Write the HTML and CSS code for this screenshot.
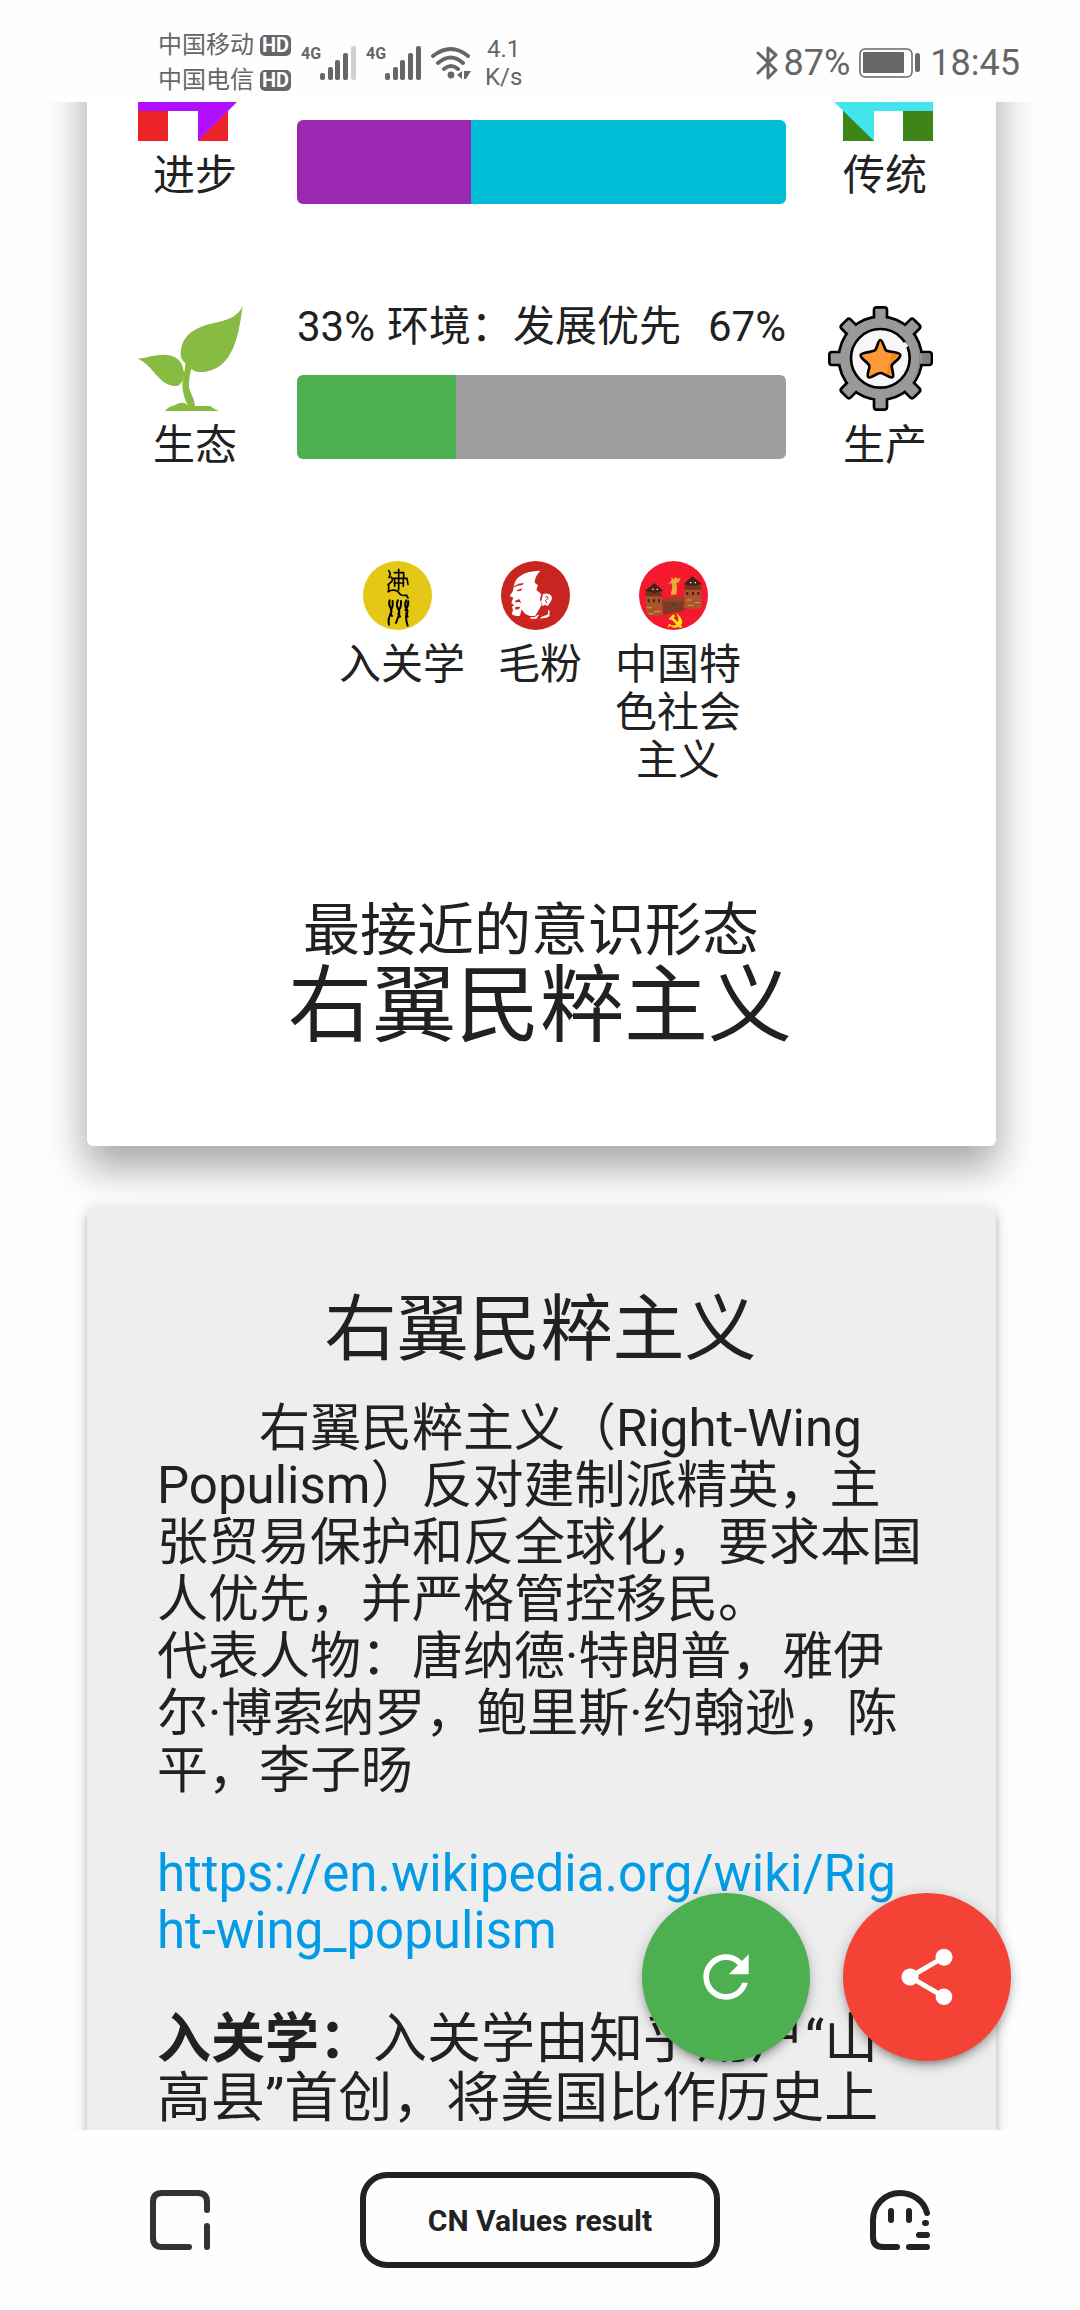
FILE: index.html
```html
<!DOCTYPE html>
<html lang="zh-CN">
<head>
<meta charset="utf-8">
<meta name="viewport" content="width=device-width, initial-scale=1">
<title>CN Values result</title>
<link rel="stylesheet" href="styles.css">
</head>
<body>
<header class="status">
  <div class="carriers">
    <div class="carrier">中国移动<span class="hd">HD</span></div>
    <div class="carrier">中国电信<span class="hd">HD</span></div>
  </div>
  <div class="signal">
    <span class="gen">4G</span>
    <svg width="36" height="34" viewBox="0 0 36 34" fill="#666"><rect y="27" width="5" height="7" rx="2"/><rect x="8" y="21" width="5" height="13" rx="2"/><rect x="15" y="14" width="5" height="20" rx="2"/><rect x="23" y="7" width="5" height="27" rx="2"/><rect x="31" width="5" height="34" rx="2" fill="#d0d0d0"/></svg>
  </div>
  <div class="signal">
    <span class="gen">4G</span>
    <svg width="36" height="34" viewBox="0 0 36 34" fill="#666"><rect y="27" width="5" height="7" rx="2"/><rect x="8" y="21" width="5" height="13" rx="2"/><rect x="15" y="14" width="5" height="20" rx="2"/><rect x="23" y="7" width="5" height="27" rx="2"/><rect x="31" width="5" height="34" rx="2"/></svg>
  </div>
  <svg class="wifi" width="40" height="34" viewBox="0 0 40 34" fill="none" stroke="#666" stroke-width="4" stroke-linecap="round"><path d="M2 10Q20 -4 37 10M7 17Q20 6 32 17M13 23Q20 17 27 23"/><circle cx="20" cy="29" r="3.4" fill="#666" stroke="none"/><path d="M26 29l5-4v8zM40 25l-5 8v-8z" fill="#666" stroke="none"/><path d="M34 25v8" stroke-width="2" stroke-linecap="butt"/></svg>
  <div class="speed"><span>4.1</span><span>K/s</span></div>
  <div class="status-right">
    <svg width="22" height="36" viewBox="0 0 22 36" fill="none" stroke="#666" stroke-width="3" stroke-linejoin="round" stroke-linecap="round"><path d="M2 8L20 25L12 33V3L20 10L2 28"/></svg>
    <span class="percent">87%</span>
    <svg width="62" height="30" viewBox="0 0 62 30"><rect x="1" y="1" width="52" height="28" rx="5" fill="none" stroke="#666" stroke-width="1.5"/><rect x="4" y="4" width="41" height="21" rx="1" fill="#666"/><rect x="56" y="5" width="5" height="19" rx="2.5" fill="#666"/></svg>
    <time class="clock">18:45</time>
  </div>
</header>

<main class="view">
  <section class="card result">
    <div class="axis">
      <div class="side">
        <svg width="105" height="90" viewBox="0 0 105 90"><path d="M0 0H90V90H60V60H30V90H0z" fill="#ec2427"/><path d="M0 0H105V45L60 90V60H0z" fill="#b010ff"/></svg>
        <span>进步</span>
      </div>
      <div class="meter bare">
        <div class="bar"><div class="fill purple" style="width:35.6%"></div><div class="fill cyan"></div></div>
      </div>
      <div class="side right">
        <svg width="105" height="90" viewBox="0 0 105 90"><path d="M15 0H105V90H75V60H46V90H15z" fill="#3d8517"/><path d="M105 0H0V45L46 90V60H105z" fill="#44e4ec"/></svg>
        <span>传统</span>
      </div>
    </div>

    <div class="axis">
      <div class="side">
        <svg width="105" height="105" viewBox="0 0 315 315" fill="#88bb41"><path d="M314 0C300 32 270 42 225 52C170 64 128 90 128 145C128 158 135 166 143 172L133 235C134 262 141 280 150 300C142 288 128 288 112 297Q92 302 80 315H243Q228 309 216 300H171C170 280 158 262 153 245C152 225 155 208 160 188C172 200 190 199 204 197C285 184 302 90 314 0z"/><path d="M0 158C35 155 62 142 92 148C120 152 134 172 136 192L140 202L134 224C128 234 122 242 108 240C58 232 46 178 0 158z"/></svg>
        <span>生态</span>
      </div>
      <div class="meter">
        <div class="caption"><span>33%</span><span>环境：发展优先</span><span class="end">67%</span></div>
        <div class="bar"><div class="fill green" style="width:32.5%"></div><div class="fill grey"></div></div>
      </div>
      <div class="side right">
        <svg width="105" height="105" viewBox="0 0 315 315">
          <defs><g id="teeth"><rect x="142" y="8" width="31" height="299" rx="4"/><rect x="142" y="8" width="31" height="299" rx="4" transform="rotate(45 157.500 157.500)"/><rect x="142" y="8" width="31" height="299" rx="4" transform="rotate(90 157.500 157.500)"/><rect x="142" y="8" width="31" height="299" rx="4" transform="rotate(135 157.500 157.500)"/></g></defs>
          <use href="#teeth" stroke="#000" stroke-width="16" stroke-linejoin="round"/><circle cx="157" cy="157" r="129"/>
          <use href="#teeth" fill="#999"/><circle cx="157" cy="157" r="121" fill="#999"/>
          <path d="M250 80Q300 157 245 243L265 213Q292 157 262 100z" fill="#808080"/><path d="M282 142h22q3 0 3 4v22q0 4-3 4h-22z" fill="#808080"/>
          <circle cx="157" cy="157" r="88" fill="#f8f6f9" stroke="#000" stroke-width="8"/><path d="M228 110l10 12" stroke="#f8f6f9" stroke-width="9"/>
          <path d="M157 102C164 102 168 126 174 133C181 138 216 138 217 147C219 157 195 169 191 179C190 188 201 210 193 214C186 217 167 201 157 201C148 201 129 217 122 214C113 209 126 188 124 179C120 169 96 157 98 147C100 138 134 139 141 133C148 126 150 102 157 102z" fill="#ff9838" stroke="#000" stroke-width="8" stroke-linejoin="round"/><path d="M196 142L211 147Q190 161 185 176Q184 188 189 207L176 202Q186 160 196 142z" fill="#fb8410"/>
        </svg>
        <span>生产</span>
      </div>
    </div>

    <div class="badges">
      <div class="badge">
        <svg width="69" height="69" viewBox="0 0 207 207"><circle cx="103.500" cy="103.500" r="103.500" fill="#e5c715"/><g fill="none" stroke="#000" stroke-width="5" stroke-linecap="round" stroke-linejoin="round"><path d="M77 29l5 9-4 12M84 48q8 8 1 15l-10 8M77 71v21M75 92q14-8 28-2l9 10q8 6 18 2l5 9M107 25v61M94 35h28v16M90 52h42l3 18M93 66h29M95 52v24M121 52v24"/><path d="M80 118q-4 11 2 21t1 20q-9 14-5 32M89 120q2 14-5 28M105 118q-7 13 0 24t2 22l-8 22M114 120q2 15-6 28M130 118q-7 14 0 24t-1 24q0 16 5 28M136 121q0 16-9 27M82 157l5 8M106 157l5 10M129 157l5 10" stroke-width="6"/></g></svg>
        <span>入关学</span>
      </div>
      <div class="badge">
        <svg width="69" height="69" viewBox="0 0 207 207"><circle cx="103.500" cy="103.500" r="103.500" fill="#c82420"/><path d="M118 29C85 30 62 38 48 53C39 63 39 76 36 89L26 105L37 110L31 126L39 132L33 137L36 148L32 159Q43 168 57 164L62 145L69 155Q84 169 103 164L111 151L122 132L117 114L121 100L106 86L111 73L101 65Q101 47 118 29z" fill="#fff"/><path d="M126 99q14-5 24 4 6 10-1 19l-9 13-9-4-5 5-6-12z" fill="#fff"/><path d="M133 108q9-4 8 4l-7 6 3 9" fill="none" stroke="#c82420" stroke-width="3"/><path d="M143 148q5 15-14 18l-10 5 17-2 8-4zM88 171q14 2 24-9l-6 10z" fill="#fff" stroke="#fff" stroke-width="3" stroke-linejoin="round"/><path d="M39 76l14-8 15-2-4 6-14 2-10 5zM48 87l17-5-5 7-11 2zM42 120l13-6 6 12-6-3-12 1zM43 138l15-1-4 7-11 2z" fill="#c82420"/><path d="M57 171q30 9 60 5" stroke="#e02818" stroke-width="4" fill="none"/></svg>
        <span>毛粉</span>
      </div>
      <div class="badge">
        <svg width="69" height="69" viewBox="0 0 207 207"><circle cx="103.500" cy="103.500" r="103.500" fill="#f5192f"/><path d="M70 118l32-7 35 2v36l-65 12z" fill="#7c3b22"/><path d="M74 114h9v-5h9v4h9v-6h9v5h9v-6h9v6h11v10H72z" fill="#8f472a"/><circle cx="105" cy="131" r="6" fill="#444"/><path d="M98 48l6 7 6-8 4 6 11-3-5 12-8 5 2 14-2 20h-17l5-22-1-12-11 1 9-9z" fill="#e9ae38"/><path d="M19 103h49l4 58-18 4-32-3z" fill="#a9542c"/><path d="M22 89h44l3 17H19z" fill="#74351f"/><path d="M17 90L46 66l27 23-27 7z" fill="#4b1e18"/><path d="M137 80h48l3 60-20 4-33-3z" fill="#a9542c"/><path d="M138 69h46l4 17h-52z" fill="#74351f"/><path d="M134 70L160 45l29 24-28 6z" fill="#4b1e18"/><path d="M29 115v9m16-9v9m15-9v9M145 93v9m17-9v9m16-9v9" stroke="#461c16" stroke-width="6"/><path d="M23 140h16m6 12h20M29 158h15M143 117h14m10 8h17m-38 8h18" stroke="#dd8942" stroke-width="4"/><path d="M40 85h4m9 0h4M153 65h4m10 0h4" stroke="#fff" stroke-width="4"/><path d="M111 155Q146 184 116 198Q104 204 94 194L86 201L90 188Q109 201 117 184Q121 170 111 155z" fill="#ffea12"/><path d="M89 174L103 160l6 6-6 4 27 27-7 5-26-27-3 3z" fill="#ffea12"/></svg>
        <span>中国特色社会主义</span>
      </div>
    </div>

    <p class="closest">最接近的意识形态</p>
    <h1 class="ideology">右翼民粹主义</h1>
  </section>

  <section class="card detail">
    <h2>右翼民粹主义</h2>
    <p class="text indent">右翼民粹主义（Right-Wing Populism）反对建制派精英，主张贸易保护和反全球化，要求本国人优先，并严格管控移民。</p>
    <p class="text">代表人物：唐纳德·特朗普，雅伊尔·博索纳罗，鲍里斯·约翰逊，陈平，李子旸</p>
    <p class="text link"><a href="https://en.wikipedia.org/wiki/Right-wing_populism">https://en.wikipedia.org/wiki/Right-wing_populism</a></p>
    <p class="note"><b>入关学：</b>入关学由知乎用户“山高县”首创，将美国比作历史上</p>
  </section>

  <div class="fabs">
    <button class="fab green" type="button" aria-label="重新测试"><svg width="68" height="68" viewBox="0 0 24 24" fill="#fff"><path d="M17.650 6.350C16.200 4.900 14.210 4 12 4c-4.420 0-7.990 3.580-7.990 8s3.570 8 7.990 8c3.730 0 6.840-2.550 7.730-6h-2.080c-.82 2.330-3.040 4-5.650 4-3.310 0-6-2.690-6-6s2.690-6 6-6c1.660 0 3.140.69 4.220 1.780L13 11h7V4l-2.350 2.350z"/></svg></button>
    <button class="fab red" type="button" aria-label="分享"><svg width="68" height="68" viewBox="0 0 24 24" fill="#fff"><path d="M18 16.080c-.76 0-1.440.3-1.960.77L8.910 12.700c.05-.23.09-.46.09-.7s-.04-.47-.09-.7l7.050-4.110c.54.5 1.250.81 2.040.81 1.660 0 3-1.340 3-3s-1.340-3-3-3-3 1.340-3 3c0 .24.04.47.09.7L8.040 9.810C7.500 9.310 6.790 9 6 9c-1.660 0-3 1.340-3 3s1.340 3 3 3c.79 0 1.500-.31 2.040-.81l7.120 4.160c-.05.21-.08.43-.08.65 0 1.610 1.310 2.920 2.920 2.920s2.920-1.310 2.920-2.920-1.310-2.920-2.920-2.920z"/></svg></button>
  </div>
</main>

<nav class="dock">
  <button class="icon" type="button" aria-label="标签页"><svg width="60" height="60" viewBox="0 0 60 60" fill="none" stroke="#333" stroke-width="6" stroke-linecap="round"><path d="M57 20V12Q57 3 48 3H12Q3 3 3 12V48Q3 57 12 57H39M57 36V57"/></svg></button>
  <button class="address" type="button">CN Values result</button>
  <button class="icon" type="button" aria-label="菜单"><svg width="60" height="60" viewBox="0 0 60 60" fill="none" stroke="#222" stroke-width="6" stroke-linecap="round"><path d="M57 23C54 11 43 3 30 3C15 3 3 15 3 30V47Q3 57 13 57H27M21 21V30M39 21V30M39 57H57M49 45H57"/><path d="M55 33H56"/></svg></button>
</nav>
</body>
</html>
```
FILE: styles.css
```css
* {
  box-sizing: border-box;
}

body {
  margin: 0;
  height: 100vh;
  display: flex;
  flex-direction: column;
  background: #fefefe;
  color: #212121;
  font-family: Roboto, "Noto Sans CJK SC", sans-serif;
}

h1, h2, p {
  margin: 0;
  font-weight: 400;
}

button {
  padding: 0;
  border: 0;
  background: none;
  font-family: inherit;
  color: inherit;
}

svg {
  display: block;
  flex: none;
}

/* System status bar */
.status {
  flex: none;
  height: 102px;
  padding: 24px 60px 0 158px;
  display: flex;
  align-items: center;
  color: #666;
}

.carriers {
  margin-right: 10px;
}

.carrier {
  display: flex;
  align-items: center;
  gap: 6px;
  height: 35px;
  font-size: 24px;
  line-height: 35px;
}

.hd {
  width: 31px;
  height: 21px;
  border-radius: 5px;
  background: #666;
  color: #fefefe;
  font-size: 20px;
  font-weight: 700;
  line-height: 21px;
  text-align: center;
}

.signal {
  display: flex;
  align-items: flex-start;
  margin-right: 10px;
}

.gen {
  width: 19px;
  font-size: 16px;
  font-weight: 700;
  line-height: 16px;
}

.speed {
  display: flex;
  flex-direction: column;
  align-items: center;
  margin-left: 14px;
  font-size: 24px;
  line-height: 28px;
}

.status-right {
  display: flex;
  align-items: center;
  margin-left: auto;
  font-size: 36px;
  line-height: 36px;
}

.percent {
  margin: 0 9px 0 6px;
}

.clock {
  margin-left: 9px;
}

/* Page, as scrolled by the reader */
.view {
  position: relative;
  flex: 1;
  min-height: 0;
  padding: 0 84px 0 87px;
  overflow: hidden;
}

.card {
  border-radius: 6px;
}

.result {
  margin-top: -90px;
  padding: 39px 54px 97px 51px;
  background: #fff;
  box-shadow: 0 20px 40px 2px rgba(0, 0, 0, .35);
}

.axis {
  display: flex;
  margin-bottom: 102px;
  font-size: 42px;
  line-height: 48px;
}

.side {
  display: flex;
  flex-direction: column;
  gap: 11px;
  width: 159px;
  padding-right: 45px;
}

.side.right {
  width: 156px;
  padding: 0 0 0 42px;
}

.side span {
  text-align: center;
}

.meter {
  flex: 1;
}

.bare {
  padding-top: 69px;
}

.caption {
  display: flex;
  gap: 12px;
  margin-bottom: 27px;
  line-height: 42px;
  white-space: nowrap;
}

.end {
  margin-left: auto;
}

.bar {
  display: flex;
  height: 84px;
  border-radius: 6px;
  overflow: hidden;
}

.purple { background: #9c27b0; }
.green { background: #4caf50; }
.red { background: #f44336; }

.cyan {
  flex: 1;
  background: #00bcd4;
}

.grey {
  flex: 1;
  background: #9e9e9e;
}

.badges {
  display: flex;
  justify-content: center;
  gap: 12px;
  margin-top: -11px;
  font-size: 42px;
  line-height: 48px;
}

.badge {
  display: flex;
  flex-direction: column;
  align-items: center;
  gap: 11px;
  width: 126px;
  text-align: center;
}

.badge svg {
  margin-right: 9px;
}

.closest {
  margin-top: 112px;
  padding-right: 18px;
  font-size: 57px;
  line-height: 68px;
  text-align: center;
}

.ideology {
  font-size: 84px;
  line-height: 84px;
  text-align: center;
}

.detail {
  margin-top: 62px;
  padding: 80px 72px 80px 70px;
  background: #eee;
  box-shadow: 0 6px 6px rgba(0, 0, 0, .14), 0 9px 3px -6px rgba(0, 0, 0, .12), 0 3px 15px rgba(0, 0, 0, .2);
}

.detail h2 {
  margin-bottom: 28px;
  font-size: 72px;
  line-height: 84px;
  text-align: center;
}

.text {
  font-size: 51px;
  line-height: 57px;
}

.indent {
  text-indent: 2em;
}

.link {
  margin: 46px 0 51px;
  word-break: break-all;
}

.link a {
  color: #039be5;
  text-decoration: none;
}

.note {
  font-size: 54px;
  line-height: 59px;
}

.fabs {
  position: absolute;
  right: 69px;
  bottom: 69px;
  display: flex;
  gap: 33px;
}

.fab {
  display: grid;
  place-items: center;
  width: 168px;
  height: 168px;
  border-radius: 50%;
  box-shadow: 0 6px 6px rgba(0, 0, 0, .14), 0 9px 3px -6px rgba(0, 0, 0, .12), 0 3px 15px rgba(0, 0, 0, .2);
}

.fab.green { background: #4caf50; }
.fab.red { background: #f44336; }

/* Browser toolbar */
.dock {
  flex: none;
  height: 180px;
  display: grid;
  grid-template-columns: repeat(3, 1fr);
  place-items: center;
}

.address {
  width: 100%;
  height: 96px;
  border: 6px solid #222;
  border-radius: 27px;
  color: #222;
  font-size: 30px;
  font-weight: 700;
}
```
